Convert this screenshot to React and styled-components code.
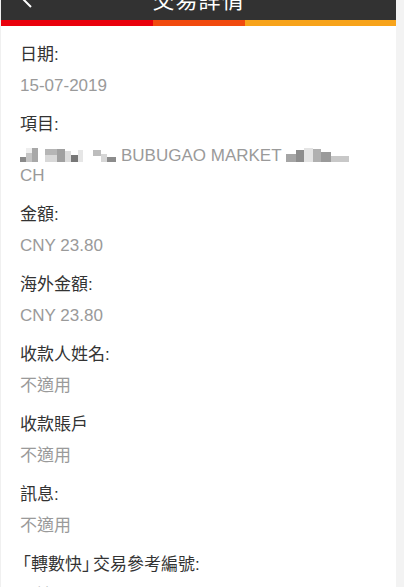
import React from 'react';
import styled, { createGlobalStyle } from 'styled-components';

const GlobalStyle = createGlobalStyle`
    html, body {
        margin: 0;
        padding: 0;
        background: #fff;
    }
    body {
        font-family: "Liberation Sans", "Noto Sans CJK TC", sans-serif;
    }
`;

const Page = styled.div`
    display: flex;
    width: 404px;
    height: 587px;
    overflow: hidden;
`;

const Main = styled.div`
    flex: 1;
    min-width: 0;
    border-left: 1px solid #f0f0f0;
`;

const ScrollTrack = styled.div`
    width: 8px;
    background-color: #f3f3f3;
`;

const Header = styled.header`
    height: 20px;
    overflow: hidden;
    background-color: #323232;
`;

const TitleBar = styled.div`
    margin-top: -24px;
    height: 44px;
    display: grid;
    grid-template-columns: 60px 1fr 60px;
    align-items: center;
`;

const BackButton = styled.div`
    display: flex;
    align-items: center;
    padding-left: 19px;
`;

const Title = styled.h1`
    margin: 0;
    text-align: center;
    color: #fff;
    font-size: 22px;
    font-weight: 400;
    font-family: "Noto Sans CJK TC", sans-serif;
    letter-spacing: 1px;
`;

const Stripe = styled.div`
    display: flex;
    height: 6px;
`;

const StripePart = styled.div`
    flex: ${({ size }) => size} 0 0;
    background-color: ${({ color }) => color};
`;

const Content = styled.main`
    padding: 18px 20px 0 19px;
`;

const Field = styled.section`
    margin-bottom: 18px;
`;

const Label = styled.div`
    font-size: 17px;
    line-height: 22px;
    color: #333;
    white-space: nowrap;
`;

// CJK corner brackets are narrower in the reference font
const Bracket = styled.span`
    margin-left: ${({ open }) => (open ? '-6px' : '0')};
    margin-right: ${({ open }) => (open ? '0' : '-6px')};
`;

const Value = styled.div`
    margin-top: 10px;
    font-size: 17px;
    line-height: 20px;
    color: #9a9a9a;
`;

const MosaicBox = styled.svg`
    display: inline-block;
    vertical-align: -2px;
    margin-right: ${({ gap }) => gap}px;
`;

// pixelated (censored) parts of the merchant name
const Mosaic = ({ width, cells, gap = 0 }) => (
    <MosaicBox width={width} height="15" viewBox={`0 0 ${width} 15`} gap={gap}>
        {cells.map(([x, y, w, h, c], i) => (
            <rect key={i} x={x} y={y} width={w} height={h} fill={c} />
        ))}
    </MosaicBox>
);

const fields = [
    { label: '日期:', value: '15-07-2019' },
    { label: '項目:', value: 'item' },
    { label: '金額:', value: 'CNY 23.80' },
    { label: '海外金額:', value: 'CNY 23.80' },
    { label: '收款人姓名:', value: '不適用' },
    { label: '收款賬戶', value: '不適用' },
    { label: '訊息:', value: '不適用' },
    { label: 'fps', value: '不適用' },
];

const FpsLabel = () => (
    <>
        <Bracket open>「</Bracket>轉數快<Bracket>」</Bracket>交易參考編號:
    </>
);

const ItemName = () => (
    <>
        <Mosaic width={18} gap={7} cells={[
            [0, 9, 6, 5, '#8a8a8a'], [6, 5, 6, 9, '#c4c4c4'], [12, 0, 6, 14, '#a8a8a8'],
            [6, 0, 6, 5, '#eeeeee'],
        ]} />
        <Mosaic width={38} gap={10} cells={[
            [0, 1, 12, 6, '#b5b5b5'], [0, 7, 12, 7, '#d8d8d8'], [12, 1, 8, 13, '#a0a0a0'],
            [20, 3, 6, 11, '#dcdcdc'], [26, 7, 7, 7, '#777'], [33, 2, 5, 12, '#e6e6e6'],
        ]} />
        <Mosaic width={23} gap={5} cells={[
            [0, 2, 8, 6, '#bdbdbd'], [8, 6, 6, 8, '#d6d6d6'], [14, 9, 9, 5, '#8c8c8c'],
        ]} />
        BUBUGAO MARKET{' '}
        <Mosaic width={63} cells={[
            [0, 6, 10, 8, '#a5a5a5'], [10, 2, 8, 12, '#8d8d8d'], [18, 0, 9, 14, '#e4e4e4'],
            [27, 1, 8, 13, '#b0b0b0'], [35, 4, 10, 10, '#9a9a9a'], [45, 8, 18, 6, '#c8c8c8'],
        ]} />
        <br />
        CH
    </>
);

export default function App() {
    return (
        <>
            <GlobalStyle />
            <Page>
                <Main>
                    <Header>
                        <TitleBar>
                            <BackButton>
                                <svg width="14" height="20" viewBox="0 0 14 20">
                                    <path d="M11 1 L2 10 L11 19" fill="none" stroke="#fff" strokeWidth="2" />
                                </svg>
                            </BackButton>
                            <Title>交易詳情</Title>
                            <div />
                        </TitleBar>
                    </Header>
                    <Stripe>
                        <StripePart size={152} color="#e9000c" />
                        <StripePart size={93} color="#f14a0e" />
                        <StripePart size={151} color="#f7a31a" />
                    </Stripe>
                    <Content>
                        {fields.map(f => (
                            <Field key={f.label}>
                                <Label>{f.label === 'fps' ? <FpsLabel /> : f.label}</Label>
                                <Value>{f.value === 'item' ? <ItemName /> : f.value}</Value>
                            </Field>
                        ))}
                    </Content>
                </Main>
                <ScrollTrack />
            </Page>
        </>
    );
}
